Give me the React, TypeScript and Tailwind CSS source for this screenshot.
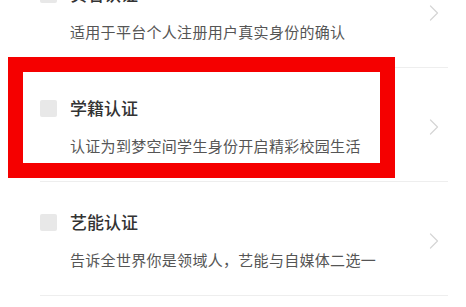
import { ChevronRight } from "lucide-react"

const items = [
  { title: "实名认证", desc: "适用于平台个人注册用户真实身份的确认" },
  { title: "学籍认证", desc: "认证为到梦空间学生身份开启精彩校园生活" },
  { title: "艺能认证", desc: "告诉全世界你是领域人，艺能与自媒体二选一" },
]

export default function App() {
  return (
    <div
      className="relative h-[307px] w-[466px] overflow-hidden bg-white"
      style={{ fontFamily: '"Noto Sans CJK SC", "Noto Sans", sans-serif' }}
    >
      <div className="-mt-[46px]">
        {items.map((item) => (
          <div key={item.title} className="ml-10 mr-[18px] flex items-center border-b border-[#eeeeee] pt-[30px] pb-[25px]">
            <div className="flex-1">
              <div className="flex h-5 items-center gap-[13px]">
                <div className="h-[17px] w-[17px] rounded-[2px] bg-[#e8e8e8]" />
                <span className="text-[17px] font-medium leading-5 text-[#333333]">{item.title}</span>
              </div>
              <p className="mt-[18px] pl-[30px] text-[15px] leading-5 tracking-[0.3px] text-[#555555]">{item.desc}</p>
            </div>
            <ChevronRight className="h-[28px] w-[28px] text-[#d6d6d6]" strokeWidth={1.1} />
          </div>
        ))}
      </div>
      <div className="absolute left-2 top-[57px] h-[121px] w-[387px] border-[15px] border-[#f50000]" />
    </div>
  )
}
